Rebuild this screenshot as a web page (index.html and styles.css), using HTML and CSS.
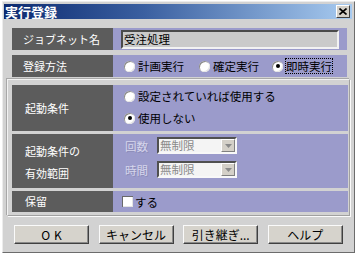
FILE: index.html
```html
<!DOCTYPE html>
<html lang="ja">
<head>
<meta charset="utf-8">
<link rel="stylesheet" href="styles.css">
</head>
<body>
<div class="dialog">
  <div class="titlebar">
    <span class="title">実行登録</span>
    <span class="close"><svg width="8" height="7" viewBox="0 0 8 7"><path d="M0.5 0.5 L7.5 6.5 M7.5 0.5 L0.5 6.5" stroke="#000" stroke-width="1.6" fill="none"/></svg></span>
  </div>
  <div class="content">
    <div class="row top r1">
      <div class="label">ジョブネット名</div>
      <div class="value v1"><div class="input">受注処理</div></div>
    </div>
    <div class="row top r2">
      <div class="label">登録方法</div>
      <div class="value v2">
        <span class="opt"><span class="radio"></span><span>計画実行</span></span>
        <span class="opt o2"><span class="radio"></span><span>確定実行</span></span>
        <span class="opt o3"><span class="radio on"></span><span class="focus">即時実行</span></span>
      </div>
    </div>
    <div class="panel">
      <div class="row r3">
        <div class="label">起動条件</div>
        <div class="value v3">
          <span class="opt line"><span class="radio"></span><span>設定されていれば使用する</span></span>
          <span class="opt line"><span class="radio on"></span><span>使用しない</span></span>
        </div>
      </div>
      <div class="row r4">
        <div class="label">起動条件の<br>有効範囲</div>
        <div class="value v4">
          <div class="cline"><span class="sub">回数</span><span class="combo"><span class="ctext">無制限</span><span class="cbtn"><svg width="7" height="4" viewBox="0 0 7 4"><path d="M0 0 H7 L3.5 4 Z" fill="#8a8a8a"/></svg></span></span></div>
          <div class="cline"><span class="sub">時間</span><span class="combo"><span class="ctext">無制限</span><span class="cbtn"><svg width="7" height="4" viewBox="0 0 7 4"><path d="M0 0 H7 L3.5 4 Z" fill="#8a8a8a"/></svg></span></span></div>
        </div>
      </div>
      <div class="row r5">
        <div class="label">保留</div>
        <div class="value v5"><span class="check"></span><span>する</span></div>
      </div>
    </div>
    <div class="buttons">
      <button class="btn ok">OK</button>
      <button class="btn">キャンセル</button>
      <button class="btn">引き継ぎ...</button>
      <button class="btn">ヘルプ</button>
    </div>
  </div>
</div>
</body>
</html>
```
FILE: styles.css
```css
* { box-sizing: border-box; margin: 0; padding: 0; }
html, body { width: 359px; height: 257px; overflow: hidden; background: #ffffff; }
body { font-family: "Noto Sans CJK JP", "Noto Sans", sans-serif; color: #000; }

.dialog {
  margin: 1px 0 0 2px;
  width: 353px;
  height: 252px;
  background: #d2d2d2;
  border: 1px solid;
  border-color: #ececec #6c6c6c #6c6c6c #ececec;
  padding: 2px 2px 2px 1px;
  display: flex;
  flex-direction: column;
}

.titlebar {
  height: 15px;
  flex: none;
  background: linear-gradient(to right, #0c2a70 0%, #3a5fa0 40%, #a8cbf0 100%);
  display: flex;
  align-items: center;
  justify-content: space-between;
  padding: 0 2px 0 1px;
}
.title { color: #fff; font-weight: bold; font-size: 13px; line-height: 15px; }
.close {
  width: 14px; height: 13px;
  background: #d4d0c8;
  border: 1px solid; border-color: #fff #404040 #404040 #fff;
  display: flex; align-items: center; justify-content: center;
}

.content {
  flex: 1;
  padding: 9px 2px 0 3px;
  display: flex;
  flex-direction: column;
}

.row { display: flex; }
.row.top { margin: 0 3px 0 5px; height: 22px; }
.r2 { margin-top: 5px !important; }

.label {
  width: 101px;
  flex: none;
  background: #5c5c5c;
  color: #fff;
  font-size: 11px;
  line-height: 15px;
  display: flex;
  align-items: center;
  padding-left: 11px;
}
.panel .label { padding-left: 13px; }

.value {
  flex: 1;
  background: #9b9bcb;
  font-size: 11.5px;
  display: flex;
  align-items: center;
}
.v1 { padding: 2px 8px 1px 8px; }
.input {
  width: 100%; height: 100%;
  background: #cacaca;
  border: 2px solid; border-color: #4a4a4a #f2f2f2 #f2f2f2 #4a4a4a;
  padding-left: 1px;
  font-size: 11.5px;
  line-height: 15px;
}
.v2 { padding-left: 11px; }

.opt { display: flex; align-items: center; gap: 3px; }
.o2 { margin-left: 15px; }
.o3 { margin-left: 13px; }
.focus { outline: 1px dotted #000; outline-offset: 0; line-height: 14px; }

.radio {
  width: 11px; height: 11px; border-radius: 50%;
  background: #fff;
  box-shadow: inset 1px 1px 0 #8a8a8a, inset -1px -1px 0 #e4e4e4;
  position: relative;
  flex: none;
}
.radio.on::after {
  content: ""; position: absolute; left: 3.5px; top: 3.5px;
  width: 4px; height: 4px; border-radius: 50%; background: #000;
}

.panel {
  margin-top: 2px;
  border: 1px solid; border-color: #f2f2f2 #a0a0a0 #a0a0a0 #f2f2f2;
  box-shadow: -1px -1px 0 #a8a8a8, 1px 1px 0 #fafafa;
  padding: 5px 1px 3px 4px;
  display: flex;
  flex-direction: column;
  gap: 3px;
}
.r3 { height: 46px; }
.v3 { flex-direction: column; align-items: flex-start; padding-left: 11px; }
.v3 .line { height: 22px; }
.r4 { height: 54px; }
.r4 .label { line-height: 22px; padding-top: 1px; }
.v4 { flex-direction: column; align-items: flex-start; justify-content: flex-start; padding: 3px 0 0 12px; gap: 7px; }
.cline { display: flex; align-items: center; height: 17px; }
.sub { color: #d6d6ec; width: 32px; font-size: 11.5px; text-shadow: 1px 1px 0 #8c8cb8; }
.combo {
  width: 80px; height: 17px;
  background: #f4f4f4;
  border: 2px solid; border-color: #505050 #f8f8f8 #f8f8f8 #505050;
  display: flex; align-items: center; justify-content: space-between;
}
.ctext { color: #8a8a8a; font-size: 11.5px; line-height: 13px; padding-left: 1px; }
.cbtn {
  width: 14px; height: 13px;
  background: #d4d0c8;
  border: 1px solid; border-color: #fff #808080 #808080 #fff;
  display: flex; align-items: center; justify-content: center;
}
.r5 { height: 21px; }
.v5 { padding-left: 9px; gap: 2px; }
.check {
  width: 11px; height: 11px; background: #fff;
  box-shadow: inset 1px 1px 0 #6a6a6a, inset -1px -1px 0 #e4e4e4;
}

.buttons {
  margin-top: 9px;
  padding-left: 7px;
  display: flex;
  gap: 9.6px;
}
.btn {
  width: 75px; height: 19px;
  background: #d6d3cc;
  border: 1px solid; border-color: #fafafa #404040 #404040 #fafafa;
  box-shadow: inset -1px -1px 0 #8a8a8a;
  font-family: "Noto Sans CJK JP", "Noto Sans", sans-serif;
  font-size: 12px;
  line-height: 15px;
  color: #000;
}
.btn.ok { letter-spacing: 4px; text-indent: 4px; }
```
